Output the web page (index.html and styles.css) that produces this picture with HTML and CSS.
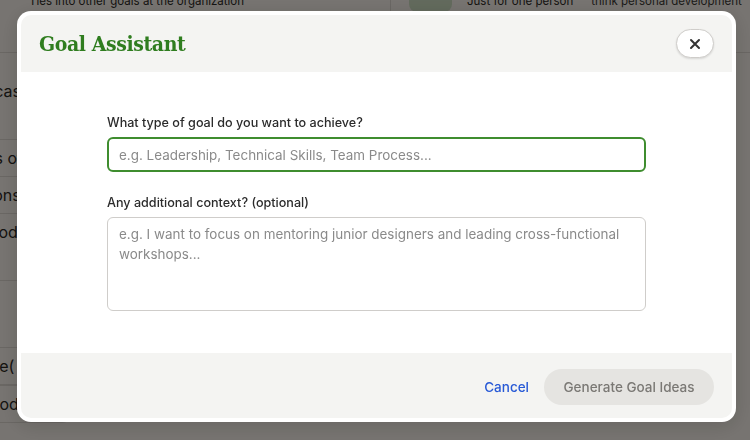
FILE: index.html
```html
<!DOCTYPE html>
<html lang="en">
<head>
    <meta charset="UTF-8">
    <meta name="viewport" content="width=device-width, initial-scale=1.0">
    <title>Goal Assistant</title>
    <link rel="stylesheet" href="styles.css">
</head>
<body>
    <!-- page behind the dialog -->
    <div class="page">
        <div class="page-top">
            <div class="top-left">Ties into other goals at the organization</div>
            <div class="top-right">
                <span class="chip"></span>
                <span>Just for one person</span>
                <span class="muted">think personal development</span>
            </div>
        </div>
        <div class="page-side">
            <div class="side-row tall">Use cases</div>
            <div class="side-row">Goals of</div>
            <div class="side-row">Motions</div>
            <div class="side-row tall">Methodology</div>
            <div class="side-row tall">User</div>
            <div class="side-row">Profile(</div>
            <div class="side-row boxed">Methods</div>
        </div>
    </div>

    <div class="overlay">
        <div class="modal">
            <div class="modal-header">
                <h1>Goal Assistant</h1>
                <button type="button" class="close-btn" aria-label="Close">
                    <svg width="12" height="12" viewBox="0 0 12 12">
                        <path d="M2 2 L10 10 M10 2 L2 10" stroke="#333" stroke-width="2" stroke-linecap="round"/>
                    </svg>
                </button>
            </div>
            <form class="modal-body" id="goalForm">
                <label for="goalType">What type of goal do you want to achieve?</label>
                <input type="text" id="goalType" class="field field-active" placeholder="e.g. Leadership, Technical Skills, Team Process..." autofocus>
                <label for="goalContext">Any additional context? (optional)</label>
                <textarea id="goalContext" class="field field-area" placeholder="e.g. I want to focus on mentoring junior designers and leading cross-functional workshops..."></textarea>
            </form>
            <div class="modal-footer">
                <button type="button" class="link-btn">Cancel</button>
                <button type="submit" form="goalForm" class="primary-btn" disabled>Generate Goal Ideas</button>
            </div>
        </div>
    </div>
</body>
</html>
```

FILE: styles.css
```css
body {
    margin: 0;
    padding: 0;
    font-family: Inter, "Noto Sans", sans-serif;
    background-color: #f3ede6;
    overflow: hidden;
}

/* background page */
.page {
    height: 440px;
    overflow: hidden;
    color: #2b2824;
    font-size: 14px;
}
.page-top {
    display: flex;
    margin-top: -6px;
    height: 58px;
    border-bottom: 1px solid #d8d2cb;
    white-space: nowrap;
    font-size: 11.5px;
}
.top-left {
    flex-shrink: 0;
    width: 361px;
    padding-left: 29px;
    border-right: 1px solid #d8d2cb;
}
.top-right {
    display: flex;
    gap: 15px;
    padding-left: 18px;
}
.chip {
    flex-shrink: 0;
    width: 43px;
    height: 30px;
    margin-top: -12px;
    border-radius: 8px;
    background-color: #c9d9bd;
}
.muted {
    margin-left: 3px;
    color: #3a3733;
}
.page-side {
    width: 120px;
    margin-left: -40px;
    margin-top: 20px;
}
.side-row {
    padding: 8px 0;
    height: 20px;
    border-bottom: 1px solid #d8d2cb;
    font-size: 16px;
}
.side-row.tall {
    height: 50px;
}
.side-row.boxed {
    border: 1px solid #d8d2cb;
    border-radius: 10px;
    width: 110px;
}

/* dialog */
.overlay {
    position: fixed;
    inset: 0;
    background-color: rgba(0, 0, 0, 0.51);
    display: flex;
    justify-content: center;
    align-items: flex-start;
    padding: 11px 0 0 3px;
}
.modal {
    width: 711px;
    padding: 4px;
    background-color: #fff;
    border-radius: 14px;
    box-shadow: 0 4px 20px rgba(0, 0, 0, 0.15);
}
.modal-header {
    display: flex;
    align-items: center;
    justify-content: space-between;
    height: 57px;
    padding: 0 18px;
    background-color: #f4f4f2;
    border-radius: 10px 10px 0 0;
}
.modal-header h1 {
    margin: 0;
    font-family: "DejaVu Serif", serif;
    font-stretch: condensed;
    font-size: 21px;
    font-weight: bold;
    letter-spacing: -0.4px;
    color: #2f7d1f;
}
.close-btn {
    display: flex;
    align-items: center;
    justify-content: center;
    width: 38px;
    height: 29px;
    padding: 0;
    background-color: #fff;
    border: 1px solid #cfcdca;
    border-radius: 15px;
    box-shadow: 0 1px 2px rgba(0, 0, 0, 0.12);
    cursor: pointer;
}
.modal-body {
    display: flex;
    flex-direction: column;
    height: 281px;
    box-sizing: border-box;
    padding: 43px 86px 0;
}
label {
    font-size: 12.6px;
    font-weight: 500;
    line-height: 16px;
    color: #2b2b2b;
    margin-bottom: 6px;
}
.field {
    box-sizing: border-box;
    width: 100%;
    font-family: Inter, "Noto Sans", sans-serif;
    font-size: 13.45px;
    color: #333;
    border: 1px solid #cfcdca;
    border-radius: 6px;
    outline: none;
}
.field::placeholder {
    color: #8a8a8a;
}
.field-active {
    height: 35px;
    padding: 0 10px;
    border: 2px solid #3f8d2f;
    margin-bottom: 23px;
}
.field-area {
    height: 94px;
    padding: 6px 11px;
    line-height: 20px;
    resize: none;
}
.modal-footer {
    display: flex;
    align-items: center;
    justify-content: flex-end;
    gap: 15px;
    height: 65px;
    padding: 0 18px;
    background-color: #f4f4f2;
    border-radius: 0 0 10px 10px;
}
.link-btn {
    background: none;
    border: none;
    padding: 0;
    font-family: Inter, "Noto Sans", sans-serif;
    font-size: 13.5px;
    font-weight: 500;
    color: #2759d6;
    cursor: pointer;
    margin-top: 3px;
}
.primary-btn {
    width: 170px;
    height: 36px;
    margin-top: 3px;
    border: none;
    border-radius: 18px;
    background-color: #e5e4e1;
    font-family: Inter, "Noto Sans", sans-serif;
    font-size: 13.5px;
    font-weight: 500;
    color: #7a7874;
}
```
